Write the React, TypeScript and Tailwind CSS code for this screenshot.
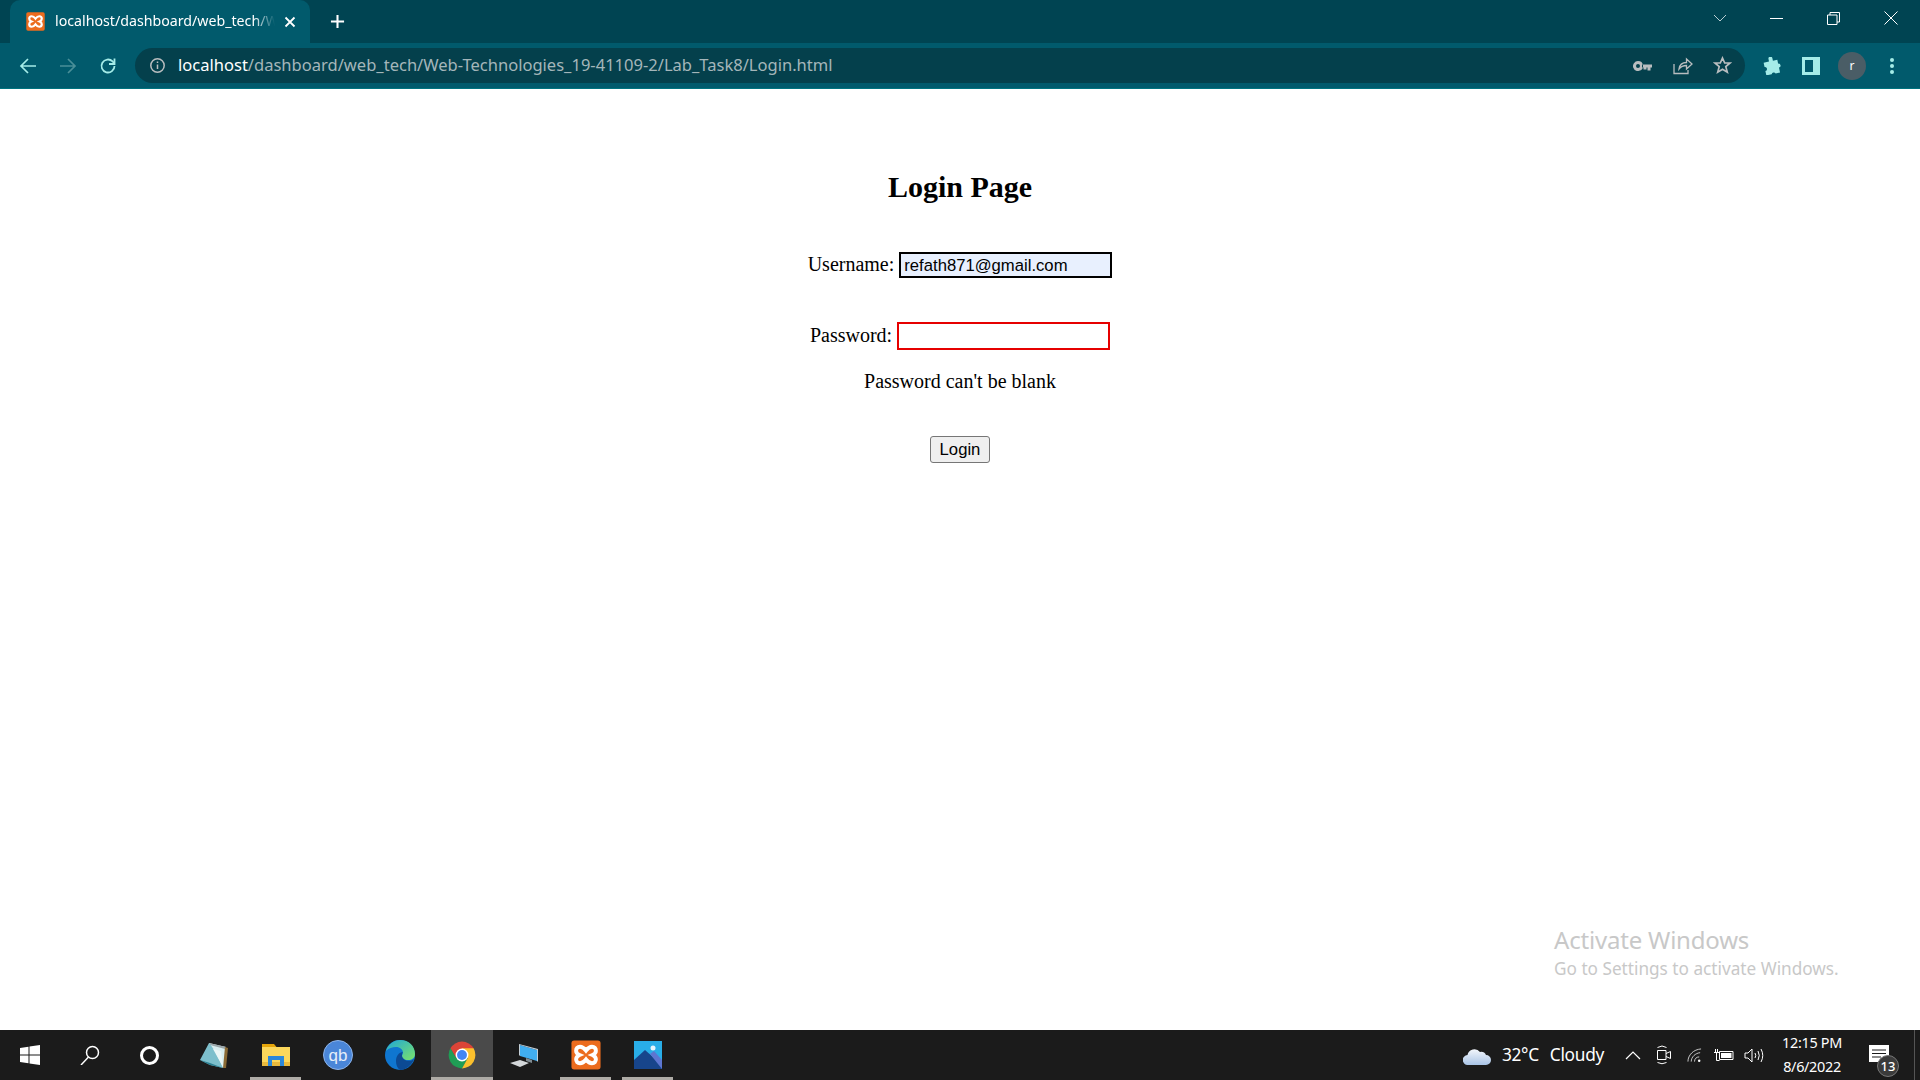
import React from "react";

const ui = { fontFamily: '"Noto Sans", "Open Sans", sans-serif' };

function Xampp({ size = 20, sw = 2.3 }: { size?: number; sw?: number }) {
  return (
    <svg width={size} height={size} viewBox="0 0 20 20">
      <rect x="0.3" y="0.3" width="19.4" height="19.4" rx="1.800" fill="#ec6c1e" />
      <path d="M6 4.500c1.800 0 3 1.200 4 2.500 1-1.300 2.200-2.500 4-2.500 1.700 0 2.600 1.200 2.600 2.600 0 1.300-.9 2.300-2.300 2.900 1.400.6 2.300 1.600 2.300 2.900 0 1.400-.9 2.600-2.600 2.600-1.800 0-3-1.200-4-2.500-1 1.300-2.200 2.500-4 2.500-1.700 0-2.600-1.200-2.600-2.600 0-1.300.9-2.300 2.300-2.900-1.400-.6-2.300-1.600-2.300-2.900 0-1.400.9-2.600 2.600-2.600z" fill="none" stroke="#fff" strokeWidth={sw} />
    </svg>
  );
}

function Chrome() {
  return (
    <svg width="28" height="28" viewBox="0 0 48 48">
      <path d="M24 24L43.900 12.500A23 23 0 0 0 4.100 12.500L14 29z" fill="#db4437" />
      <path d="M24 24L14 29 4.100 12.500A23 23 0 0 0 24 47L34 29z" fill="#1f9d55" />
      <path d="M24 24L34 29 24 47A23 23 0 0 0 43.900 12.500H24z" fill="#fbc02d" />
      <circle cx="24" cy="24" r="11" fill="#fff" />
      <circle cx="24" cy="24" r="8.500" fill="#4285f4" />
    </svg>
  );
}

function TaskIcon({ children, active, running, width = "w-[62px]" }: { children: React.ReactNode; active?: boolean; running?: boolean; width?: string }) {
  return (
    <div className={`relative flex h-full ${width} shrink-0 items-center justify-center ${active ? "bg-[#4a4a4a]" : ""}`}>
      {children}
      {running && <div className={`absolute bottom-0 h-[3px] bg-[#aeaba6] ${active ? "left-0 right-0" : "left-[5px] right-[6px]"}`} />}
    </div>
  );
}

function TopBar() {
  return (
    <div className="flex h-[43px] shrink-0 items-end bg-[#004452] pl-[10px]" style={ui}>
      <div className="flex h-[43px] w-[300px] items-center rounded-t-[10px] bg-[#015a6c] pl-[16px]">
        <Xampp size={19} />
        <span className="ml-[10px] -mt-[1px] w-[220px] overflow-hidden whitespace-nowrap text-[14.2px] text-white [mask-image:linear-gradient(to_right,black_90%,transparent)]">
          localhost/dashboard/web_tech/Web
        </span>
        <svg width="12" height="12" viewBox="0 0 12 12" className="ml-[9px]" stroke="#fff" strokeWidth="1.800">
          <path d="M1.500 1.500l9 9M10.500 1.500l-9 9" />
        </svg>
      </div>
      <svg width="15" height="15" viewBox="0 0 16 16" className="mb-[14px] ml-[20px]" stroke="#fff" strokeWidth="2.200">
        <path d="M8 1v14M1 8h14" />
      </svg>
      <div className="ml-auto flex h-full items-start pr-[1px]">
        <div className="flex h-[36px] w-[57px] items-center justify-center">
          <svg width="14" height="8" viewBox="0 0 14 8" fill="none" stroke="#b9cdd2"><path d="M1 1l6 6 6-6" /></svg>
        </div>
        <div className="flex h-[36px] w-[57px] items-center justify-center">
          <div className="h-px w-[13px] bg-white" />
        </div>
        <div className="flex h-[36px] w-[57px] items-center justify-center">
          <svg width="13" height="13" viewBox="0 0 13 13" fill="none" stroke="#fff"><path d="M.5 3h9.500v9.500h-9.500zM3 3V.5h9.500V10H10" /></svg>
        </div>
        <div className="flex h-[36px] w-[57px] items-center justify-center">
          <svg width="14" height="14" viewBox="0 0 14 14" fill="none" stroke="#fff"><path d="M.5.5l13 13M13.500.5l-13 13" /></svg>
        </div>
      </div>
    </div>
  );
}

function Toolbar() {
  return (
    <div className="flex h-[46px] shrink-0 items-center border-b border-b-[#00737f] bg-[#015a6c] pl-[19px]" style={ui}>
      <svg width="18" height="18" viewBox="0 0 18 18" fill="none" stroke="#a5ece8" strokeWidth="1.700"><path d="M17 9H2M9 2L2 9l7 7" /></svg>
      <svg width="18" height="18" viewBox="0 0 18 18" fill="none" stroke="#4a8f98" strokeWidth="1.700" className="ml-[22px]"><path d="M1 9h15M9 2l7 7-7 7" /></svg>
      <svg width="18" height="18" viewBox="0 0 18 18" fill="none" stroke="#a5ece8" strokeWidth="1.800" className="ml-[22px]">
        <path d="M15.500 9a6.500 6.500 0 1 1-1.900-4.600L15.500 6.500" />
        <path d="M15.500 1.500v5.500H10" />
      </svg>
      <div className="ml-[18px] flex h-[35px] w-[1610px] shrink-0 items-center rounded-full bg-[#04404c] pl-[14px]">
        <svg width="17" height="17" viewBox="0 0 17 17" fill="none" stroke="#b9bdbf" strokeWidth="1.500">
          <circle cx="8.500" cy="8.500" r="6.700" />
          <path d="M8.500 7.500v4.500M8.500 4.500v1.600" />
        </svg>
        <span className="ml-[12px] whitespace-nowrap text-[16.550px] text-[#a4b6ba]">
          <span className="text-white">localhost</span>/dashboard/web_tech/Web-Technologies_19-41109-2/Lab_Task8/Login.html
        </span>
        <div className="ml-auto flex items-center">
          <svg width="19" height="10" viewBox="0 0 19 10" fill="#b9bdbf">
            <path d="M5 0a5 5 0 1 1-4.700 6.700A5 5 0 0 1 5 0zm0 3a2 2 0 1 0 0 4 2 2 0 0 0 0-4zM9 3.500h10V6.500h-1.500V9.500h-3V6.500h-1V8.500h-3V6.500H9z" fillRule="evenodd" />
          </svg>
          <svg width="20" height="19" viewBox="0 0 20 19" fill="none" stroke="#b9bdbf" strokeWidth="1.300" className="ml-[21px]">
            <path d="M1 8v9.500h14V14M6 13c.6-4 3.500-6.500 7.500-6.500V3L19 8l-5.500 5V9.500C10 9.500 8 10.500 6 13z" />
          </svg>
          <svg width="19" height="19" viewBox="0 0 19 19" fill="none" stroke="#b9bdbf" strokeWidth="1.700" className="ml-[20px] mr-[13px]">
            <path d="M9.500 2l2.200 5h5.300l-4.200 3.600 1.500 5.600-4.800-3-4.800 3 1.500-5.600L2 7h5.300z" />
          </svg>
        </div>
      </div>
      <svg width="18" height="18" viewBox="0 0 18 18" fill="#a5ece8" className="ml-[18px] shrink-0">
        <path d="M7 1.500a2 2 0 0 1 4 0V4h4.500v4a2 2 0 0 1 0 4V17H11a2.200 2.200 0 0 0-4 0H1.500v-4.500a2 2 0 0 0 0-4V4H7z" transform="rotate(-12 9 9)" />
      </svg>
      <svg width="18" height="18" viewBox="0 0 18 18" className="ml-[21px] shrink-0">
        <path d="M0 0h18v18H0z" fill="#a5ece8" />
        <path d="M3 3h8v12H3z" fill="#015a6c" />
      </svg>
      <div className="ml-[18px] flex h-[28px] w-[28px] shrink-0 items-center justify-center rounded-full bg-[#4a5d66] text-[12px] text-white">r</div>
      <div className="ml-[24px] flex shrink-0 flex-col gap-[2px]">
        <div className="h-[4px] w-[4px] rounded-full bg-[#a5ece8]" />
        <div className="h-[4px] w-[4px] rounded-full bg-[#a5ece8]" />
        <div className="h-[4px] w-[4px] rounded-full bg-[#a5ece8]" />
      </div>
    </div>
  );
}

function Page() {
  const serif = { fontFamily: '"Liberation Serif", serif' };
  const sans = { fontFamily: '"Liberation Sans", sans-serif' };
  return (
    <div className="relative flex flex-1 flex-col items-center bg-white text-black" style={serif}>
      <h2 className="mt-[81px] text-[30px] leading-[33px] font-bold">Login Page</h2>
      <div className="mt-[49px] flex h-[26px] items-center text-[20px]">
        <span className="pb-[2px]">Username:</span>
        <div className="ml-[5px] flex h-[26px] w-[213px] items-center border-2 border-black bg-[#e8f0fe] pl-[3px] text-[16.670px]" style={sans}>
          refath871@gmail.com
        </div>
      </div>
      <div className="mt-[44px] flex h-[28px] items-center text-[20px]">
        <span className="pb-[2px]">Password:</span>
        <div className="ml-[5px] h-[28px] w-[213px] border-2 border-[#e60000] bg-white" />
      </div>
      <p className="mt-[20px] text-[20px] leading-[22px]">Password can't be blank</p>
      <button className="mt-[44px] flex h-[27px] w-[60px] items-center justify-center rounded-[3px] border border-[#767676] bg-[#efefef] text-[16.670px]" style={sans}>
        Login
      </button>
      <div className="absolute left-[1554px] top-[835px] text-[#c8c8c8]" style={ui}>
        <div className="text-[24px] leading-[32px] tracking-[-0.2px]">Activate Windows</div>
        <div className="text-[17.200px] leading-[26px]">Go to Settings to activate Windows.</div>
      </div>
    </div>
  );
}

function Taskbar() {
  return (
    <div className="flex h-[50px] shrink-0 items-center bg-[#1b1b1b] text-white" style={ui}>
      <TaskIcon width="w-[59px]">
        <svg width="20" height="20" viewBox="0 0 20 20" fill="#fff">
          <path d="M0 3l8.500-1.300V9.500H0zM9.500 1.500L20 0v9.500H9.500zM0 10.500h8.500v7.800L0 17zM9.500 10.500H20V20L9.500 18.500z" />
        </svg>
      </TaskIcon>
      <TaskIcon>
        <svg width="20" height="20" viewBox="0 0 20 20" fill="none" stroke="#fff" strokeWidth="1.500">
          <circle cx="12.500" cy="7.500" r="6" />
          <path d="M8.500 12L1 20" />
        </svg>
      </TaskIcon>
      <TaskIcon>
        <div className="mr-[5px] h-[19px] w-[19px] rounded-full border-[3px] border-white" />
      </TaskIcon>
      <TaskIcon>
        <svg width="28" height="27" viewBox="0 0 28 27">
          <path d="M9 1l17 4-2 21-15-5z" fill="#d9eef0" />
          <path d="M9 1l17 4-1 2-15-4z" fill="#9aa5a8" />
          <path d="M0 18L9 1c3 3 4 6 6 8l8 17-13-3z" fill="#7dbfcc" />
          <path d="M0 18l10 3 13 5-13-3z" fill="#2c7f92" />
          <path d="M25 5l3 1-2 20-3 0z" fill="#8a6a35" />
          <path d="M13 7l10 18-2-16z" fill="#eaf6f6" />
        </svg>
      </TaskIcon>
      <TaskIcon running>
        <svg width="28" height="22" viewBox="0 0 28 22">
          <path d="M0 0h12l2.500 3H0z" fill="#e5a50a" />
          <path d="M0 3h28v19H0z" fill="#fbd75b" />
          <path d="M0 18h28v4H0z" fill="#e8b93c" />
          <path d="M6 12h16v10h-4v-6h-8v6H6z" fill="#2b87d9" />
        </svg>
      </TaskIcon>
      <TaskIcon>
        <div className="flex h-[30px] w-[30px] items-center justify-center rounded-full border border-[#8db4ea] bg-[#4a86d8] text-[17px] leading-none text-[#e4edf9]" style={{ fontFamily: '"Liberation Sans", sans-serif' }}>
          qb
        </div>
      </TaskIcon>
      <TaskIcon>
        <svg width="30" height="30" viewBox="0 0 30 30">
          <defs>
            <linearGradient id="eg" x1="0" y1="0" x2="1" y2="1">
              <stop offset="0" stopColor="#1ea7d8" />
              <stop offset="1" stopColor="#7be36a" />
            </linearGradient>
          </defs>
          <circle cx="15" cy="15" r="15" fill="#0f76d0" />
          <path d="M1 11C3 4 9 0 15 0c9 0 15 6 15 14 0 4-3 6-7 6-4 0-6-2-6-4 0-1 1-2 1-3.500 0-3-3-5.500-7-5.500-4 0-7 1-10 4z" fill="url(#eg)" />
          <path d="M11 21c0-5 3-9 7-9-2 3-1 6 2 8 3 1.500 7 1 9-1-2 6-8 11-14 11-3-2-4-6-4-9z" fill="#0c4a94" />
        </svg>
      </TaskIcon>
      <TaskIcon active running>
        <Chrome />
      </TaskIcon>
      <TaskIcon>
        <svg width="28" height="23" viewBox="0 0 28 23">
          <path d="M10 1l17 5v11L10 12z" fill="#41aef0" />
          <path d="M9 0l19 5v13l-1-1V6L10 1v11l-1-1z" fill="#c4d0d8" />
          <path d="M16 14l6 2 0 3-6-2z" fill="#7f8b92" />
          <path d="M0 19l10-3 9 3-9 4z" fill="#d4d8da" />
        </svg>
      </TaskIcon>
      <TaskIcon running>
        <Xampp size={30} sw={2.600} />
      </TaskIcon>
      <TaskIcon running>
        <svg width="28" height="28" viewBox="0 0 28 28">
          <rect width="28" height="28" fill="#29aee8" />
          <circle cx="19" cy="7" r="2.500" fill="#e8f6fd" />
          <path d="M0 28V19L11 9l17 15v4z" fill="#17458b" />
          <path d="M16 13l4-3 8 9v9z" fill="#5d76d1" />
        </svg>
      </TaskIcon>
      <div className="ml-auto flex h-full items-center">
        <svg width="28" height="19" viewBox="0 0 28 19">
          <defs>
            <linearGradient id="cl" x1="0" y1="0" x2="0" y2="1">
              <stop offset="0" stopColor="#f3f6fb" />
              <stop offset="1" stopColor="#a9c4e6" />
            </linearGradient>
          </defs>
          <path d="M5 19a5 5 0 0 1-.5-10A7 7 0 0 1 17 6a5.500 5.500 0 0 1 6 3 5 5 0 0 1 0 10z" fill="url(#cl)" />
        </svg>
        <span className="ml-[11px] whitespace-nowrap text-[17.300px] tracking-[-0.3px]">32°C</span>
        <span className="ml-[11px] whitespace-nowrap text-[17.300px] tracking-[-0.3px]">Cloudy</span>
        <svg width="16" height="9" viewBox="0 0 16 9" fill="none" stroke="#fff" strokeWidth="1.200" className="ml-[21px]"><path d="M1 8l7-7 7 7" /></svg>
        <svg width="14" height="20" viewBox="0 0 14 20" fill="none" stroke="#fff" className="ml-[16px]">
          <path d="M.5 5.500h8.500v9H.5zM9 8.500l4.500-2v7L9 11.500M.5 2.500Q5-.500 9.500 2.500M.5 17.500q4.500 2.500 9 0" />
        </svg>
        <svg width="15" height="15" viewBox="0 0 16 15" fill="none" stroke="#d0d0d0" className="ml-[16px]">
          <path d="M1 14C1 7 7 1 15 .5M4.500 14C4.500 9 9 5 14 4.500M8 14c0-3 2-5 5-5" />
          <circle cx="13" cy="13" r="1.300" fill="#fff" stroke="none" />
        </svg>
        <svg width="20" height="12" viewBox="0 0 20 12" fill="none" stroke="#fff" className="ml-[12px]">
          <path d="M5.500 2.500h13.500v8h-13.500z" />
          <path d="M7 4h10.500v5H7z" fill="#fff" stroke="none" />
          <path d="M0 3.500h5M1.500 0v3.500M3.500 0v3.500M2.500 4v7.500h3" />
        </svg>
        <svg width="20" height="15" viewBox="0 0 20 15" fill="none" stroke="#fff" className="ml-[10px]">
          <path d="M1 5h3l4-4v13l-4-4H1zM11 5q1.500 2.500 0 5M14 3q2.500 4.500 0 9M17 1q3.500 6.500 0 13" />
        </svg>
        <div className="ml-[12px] flex w-[72px] flex-col items-center text-[14.400px] leading-[24px]">
          <span className="whitespace-nowrap tracking-[-0.3px]">12:15 PM</span>
          <span className="whitespace-nowrap tracking-[-0.3px]">8/6/2022</span>
        </div>
        <div className="relative ml-[21px] h-[50px] w-[45px]">
          <svg width="20" height="19" viewBox="0 0 20 19" className="absolute left-0 top-[15px]">
            <path d="M0 0h20v17H0z" fill="#fff" />
            <path d="M3 5h14M3 8.500h14M3 12h9" stroke="#1b1b1b" />
          </svg>
          <div className="absolute left-[8px] top-[25px] flex h-[22px] w-[22px] items-center justify-center rounded-full border border-[#777] bg-[#3b3b3b] text-[13px] leading-none font-medium">13</div>
        </div>
        <div className="h-full w-px bg-[#555]" />
        <div className="w-[5px]" />
      </div>
    </div>
  );
}

export default function App() {
  return (
    <div className="flex h-[1080px] w-[1920px] flex-col overflow-hidden">
      <TopBar />
      <Toolbar />
      <Page />
      <Taskbar />
    </div>
  );
}
